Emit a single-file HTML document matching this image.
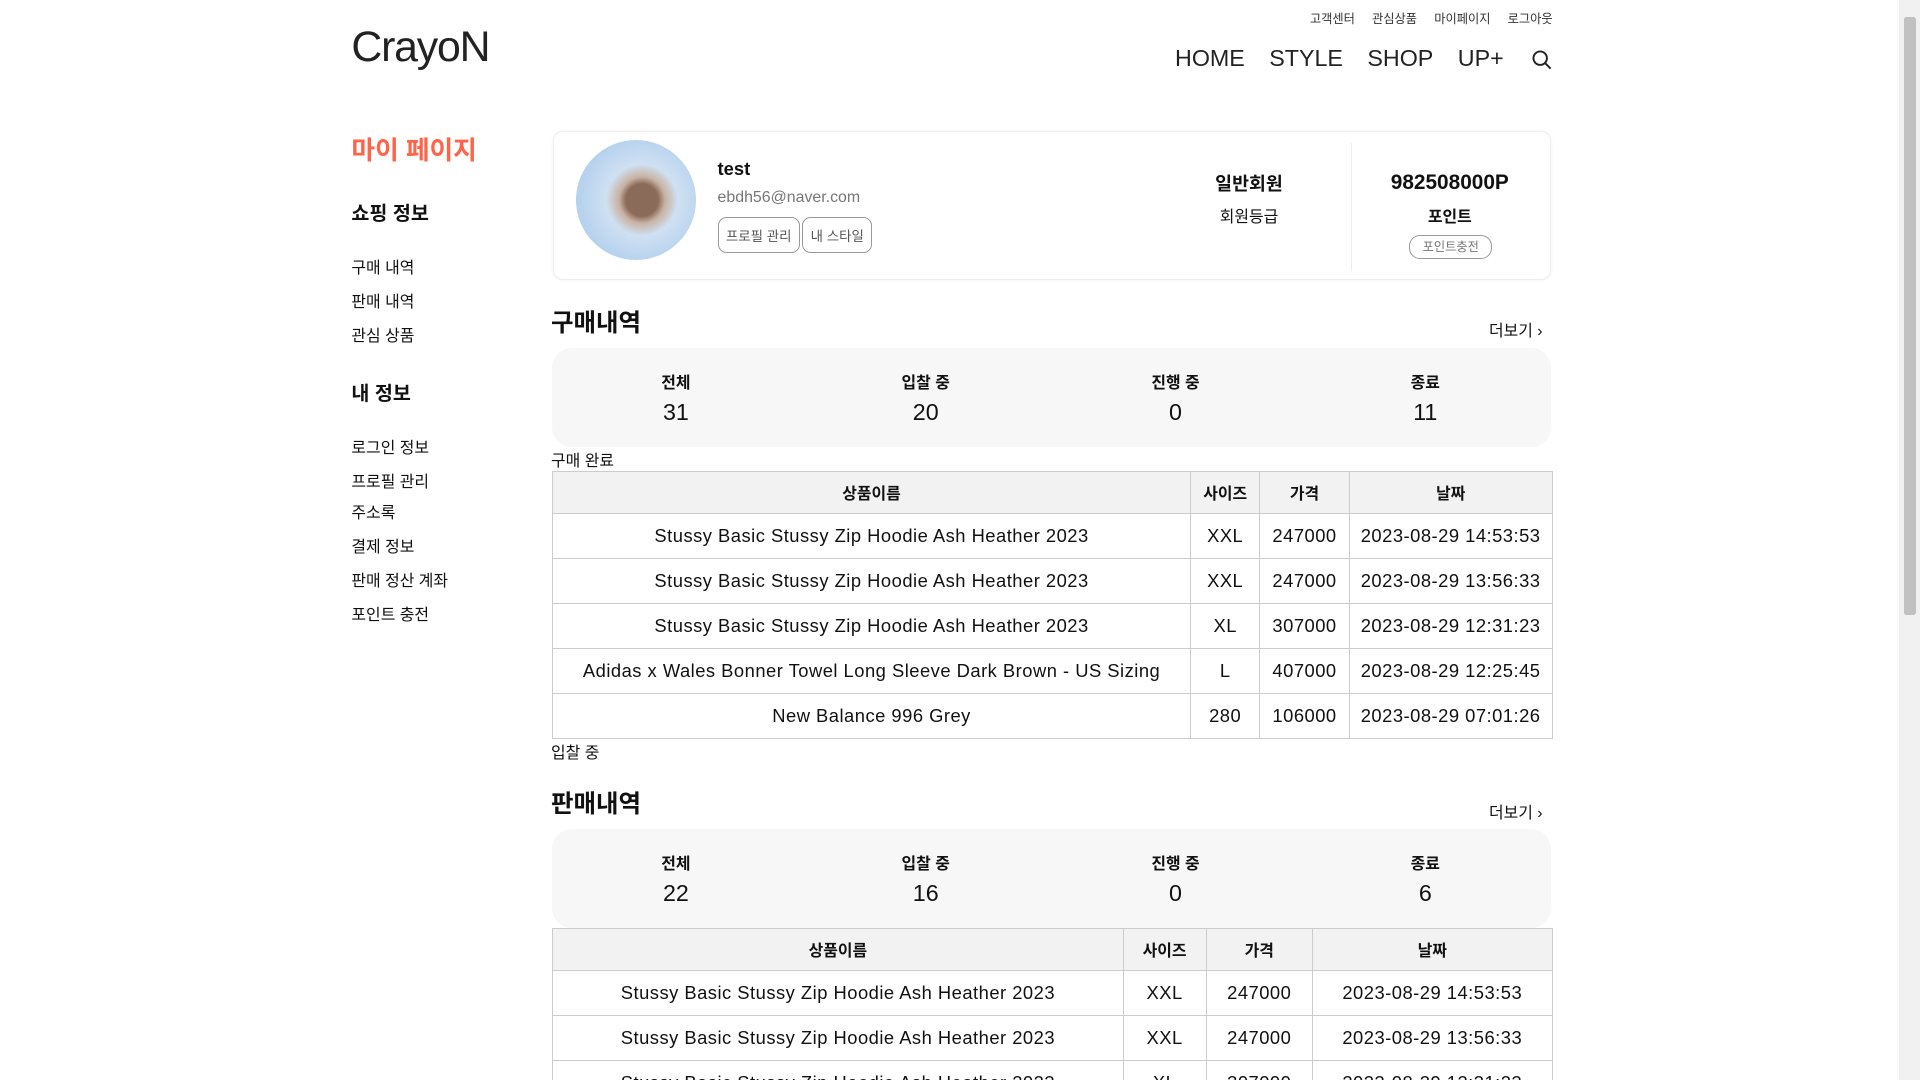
<!DOCTYPE html>
<html><head><meta charset="utf-8"><style>
html,body{margin:0;padding:0;background:#fff;overflow:hidden;width:1920px;height:1080px}
#w{zoom:1.22449;width:1568px;height:882px;position:relative;font-family:"Liberation Sans","Noto Sans CJK KR",sans-serif;color:#111}
.a{position:absolute}
.top a{font-size:10px;color:#333;margin-left:14px}
.nav span{font-size:19px;margin-left:20px;color:#222}
.side{font-size:13px;color:#111}
.stats{position:absolute;left:451px;width:816px;height:81px;background:#f7f7f7;border-radius:16px}
.stats div{position:absolute;top:18px;width:120px;text-align:center}
.stats b{display:block;font-size:13px}
.stats span{display:block;font-size:19px;margin-top:5px}
table{position:absolute;left:451px;width:817px;border-collapse:collapse;font-size:15px;letter-spacing:0.4px}
td,th{border:1px solid #ccc;text-align:center;height:36px;padding:0}
th{background:#f2f2f2;font-size:13px;height:33px;letter-spacing:0}
.more{font-size:13px}
.btn{display:inline-block;border:1px solid #999;border-radius:7px;font-size:11px;color:#555;padding:6px 6px;margin-right:2px}
</style></head><body><div id="w">
<div class="a top" style="right:300px;top:5px"><a>고객센터</a><a>관심상품</a><a>마이페이지</a><a>로그아웃</a></div>
<div class="a" style="left:287px;top:19px;font-size:35px;letter-spacing:-1px;color:#222">CrayoN</div>
<div class="a nav" style="right:340px;top:37px"><span>HOME</span><span>STYLE</span><span>SHOP</span><span>UP+</span></div>
<svg class="a" style="left:1250px;top:40px" width="18" height="18" viewBox="0 0 18 18"><circle cx="7.5" cy="7.5" r="5.5" fill="none" stroke="#222" stroke-width="1.6"/><path d="M11.5 11.5L16 16" stroke="#222" stroke-width="1.6"/></svg>
<div class="a" style="left:287px;top:106px;font-size:21px;color:#ff6348;font-weight:bold">마이 페이지</div>
<div class="a side" style="left:287px;top:161px;font-size:16px;font-weight:bold">쇼핑 정보</div>
<div class="a side" style="left:287px;top:208px">구매 내역</div>
<div class="a side" style="left:287px;top:236px">판매 내역</div>
<div class="a side" style="left:287px;top:264px">관심 상품</div>
<div class="a side" style="left:287px;top:308px;font-size:16px;font-weight:bold">내 정보</div>
<div class="a side" style="left:287px;top:355px">로그인 정보</div>
<div class="a side" style="left:287px;top:383px">프로필 관리</div>
<div class="a side" style="left:287px;top:408px">주소록</div>
<div class="a side" style="left:287px;top:436px">결제 정보</div>
<div class="a side" style="left:287px;top:464px">판매 정산 계좌</div>
<div class="a side" style="left:287px;top:492px">포인트 충전</div>
<div class="a" style="left:452px;top:107px;width:813px;height:120px;border:1px solid #eee;border-radius:8px;box-shadow:0 0 3px #f2f2f2"></div>
<div class="a" style="left:470px;top:114px;width:98px;height:98px;border-radius:50%;background:radial-gradient(circle at 55% 50%,#8a6a58 0 18%,#c9b2a3 26%,#cfe0f2 40%,#9ec4ea 100%)"></div>
<div class="a" style="left:586px;top:129px;font-size:15px;font-weight:bold">test</div>
<div class="a" style="left:586px;top:154px;font-size:13px;color:#777">ebdh56@naver.com</div>
<div class="a" style="left:586px;top:177px"><span class="btn">프로필 관리</span><span class="btn">내 스타일</span></div>
<div class="a" style="left:1103px;top:117px;width:1px;height:104px;background:#eee"></div>
<div class="a" style="left:970px;top:139px;width:100px;text-align:center;font-size:15px;font-weight:bold">일반회원</div>
<div class="a" style="left:970px;top:167px;width:100px;text-align:center;font-size:13px">회원등급</div>
<div class="a" style="left:1120px;top:140px;width:128px;text-align:center;font-size:17px;font-weight:bold">982508000P</div>
<div class="a" style="left:1134px;top:167px;width:100px;text-align:center;font-size:13px;font-weight:bold">포인트</div>
<div class="a" style="left:1151px;top:192px;width:66px;height:18px;border:1px solid #999;border-radius:9px;font-size:10px;color:#777;text-align:center;line-height:18px">포인트충전</div>

<div class="a" style="left:450px;top:248px;font-size:20px;font-weight:bold">구매내역</div>
<div class="a more" style="left:1216px;top:260px">더보기 ›</div>
<div class="stats" style="top:284px"><div style="left:41px"><b>전체</b><span>31</span></div><div style="left:245px"><b>입찰 중</b><span>20</span></div><div style="left:449px"><b>진행 중</b><span>0</span></div><div style="left:653px"><b>종료</b><span>11</span></div></div>
<div class="a" style="left:450px;top:366px;font-size:13px">구매 완료</div>
<table style="top:385px"><tr><th>상품이름</th><th style="width:56px">사이즈</th><th style="width:72px">가격</th><th style="width:165px">날짜</th></tr>
<tr><td>Stussy Basic Stussy Zip Hoodie Ash Heather 2023</td><td>XXL</td><td>247000</td><td>2023-08-29 14:53:53</td></tr>
<tr><td>Stussy Basic Stussy Zip Hoodie Ash Heather 2023</td><td>XXL</td><td>247000</td><td>2023-08-29 13:56:33</td></tr>
<tr><td>Stussy Basic Stussy Zip Hoodie Ash Heather 2023</td><td>XL</td><td>307000</td><td>2023-08-29 12:31:23</td></tr>
<tr><td>Adidas x Wales Bonner Towel Long Sleeve Dark Brown - US Sizing</td><td>L</td><td>407000</td><td>2023-08-29 12:25:45</td></tr>
<tr><td>New Balance 996 Grey</td><td>280</td><td>106000</td><td>2023-08-29 07:01:26</td></tr></table>
<div class="a" style="left:450px;top:604px;font-size:13px">입찰 중</div>
<div class="a" style="left:450px;top:641px;font-size:20px;font-weight:bold">판매내역</div>
<div class="a more" style="left:1216px;top:653px">더보기 ›</div>
<div class="stats" style="top:677px"><div style="left:41px"><b>전체</b><span>22</span></div><div style="left:245px"><b>입찰 중</b><span>16</span></div><div style="left:449px"><b>진행 중</b><span>0</span></div><div style="left:653px"><b>종료</b><span>6</span></div></div>
<table style="top:758px"><tr><th>상품이름</th><th style="width:67px">사이즈</th><th style="width:86px">가격</th><th style="width:195px">날짜</th></tr>
<tr><td>Stussy Basic Stussy Zip Hoodie Ash Heather 2023</td><td>XXL</td><td>247000</td><td>2023-08-29 14:53:53</td></tr>
<tr><td>Stussy Basic Stussy Zip Hoodie Ash Heather 2023</td><td>XXL</td><td>247000</td><td>2023-08-29 13:56:33</td></tr>
<tr><td>Stussy Basic Stussy Zip Hoodie Ash Heather 2023</td><td>XL</td><td>307000</td><td>2023-08-29 12:31:23</td></tr></table>
<div class="a" style="left:1551px;top:0;width:17px;height:882px;background:#f1f1f1"></div>
<div class="a" style="left:1555px;top:14px;width:10px;height:488px;background:#c1c1c1;border-radius:2px"></div>
</div></body></html>
